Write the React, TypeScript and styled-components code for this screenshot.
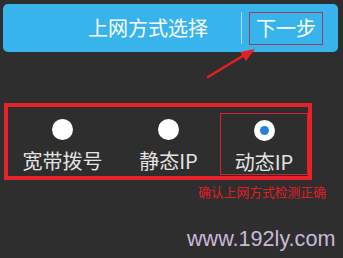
import React from "react";
import styled, { createGlobalStyle } from "styled-components";

const GlobalStyle = createGlobalStyle`
  html, body {
    margin: 0;
    padding: 0;
    background: #2e2e2e;
  }
`;

const Page = styled.div`
  position: relative;
  width: 343px;
  height: 258px;
  box-sizing: border-box;
  padding: 4px 5px 0 3px;
  background: #2e2e2e;
  font-family: "Noto Sans CJK SC", "Noto Sans", sans-serif;
  overflow: hidden;
`;

const Header = styled.div`
  height: 48px;
  border-radius: 5px;
  background: #38b4ec;
  display: flex;
  align-items: center;
  justify-content: flex-end;
  padding-right: 15px;
`;

const Title = styled.div`
  color: #fff;
  font-size: 20px;
  line-height: 1;
  margin-right: 33px;
`;

const Divider = styled.div`
  width: 1px;
  height: 32px;
  background: #a9ddf6;
  margin-right: 7px;
`;

const NextBtn = styled.div`
  width: 74px;
  height: 33px;
  box-sizing: border-box;
  border: 1.5px solid #a33b5e;
  display: flex;
  align-items: center;
  justify-content: center;
  color: #fff;
  font-size: 20px;
  line-height: 1;
`;

const Arrow = styled.svg`
  position: absolute;
  left: 200px;
  top: 44px;
`;

const Group = styled.div`
  margin: 51px 0 0 1px;
  width: 308px;
  height: 77px;
  box-sizing: border-box;
  border: 4px solid #e8222b;
  display: grid;
  grid-template-columns: 109px 103px 88px;
  align-items: start;
`;

const Option = styled.div<{ $marked?: boolean }>`
  height: ${(p) => (p.$marked ? "62px" : "69px")};
  margin-top: ${(p) => (p.$marked ? "6px" : "0")};
  box-sizing: border-box;
  border: ${(p) => (p.$marked ? "1.5px solid #d8222b" : "none")};
  display: flex;
  flex-direction: column;
  align-items: center;
  padding-top: ${(p) => (p.$marked ? "6px" : "12px")};
`;

const Radio = styled.div<{ $checked?: boolean }>`
  width: 21px;
  height: 21px;
  border-radius: 50%;
  background: #fff;
  display: flex;
  align-items: center;
  justify-content: center;
  &::after {
    content: "";
    display: ${(p) => (p.$checked ? "block" : "none")};
    width: 9px;
    height: 9px;
    border-radius: 50%;
    background: #2d7fd6;
  }
`;

const Label = styled.div`
  margin-top: 10px;
  color: #e4e4e4;
  font-size: 20px;
  line-height: 22px;
`;

const Caption = styled.div`
  margin: 4px 0 0 195px;
  color: #e01e24;
  font-size: 12.8px;
  line-height: 16px;
  white-space: nowrap;
`;

const Watermark = styled.div`
  margin: 27px 0 0 184px;
  color: #c9b9d9;
  font-family: "Liberation Sans", Arial, sans-serif;
  font-size: 21.6px;
  line-height: 24px;
  white-space: nowrap;
`;

const options = [
  { label: "宽带拨号", checked: false },
  { label: "静态IP", checked: false },
  { label: "动态IP", checked: true },
];

export default function App() {
  return (
    <Page>
      <GlobalStyle />
      <Header>
        <Title>上网方式选择</Title>
        <Divider />
        <NextBtn>下一步</NextBtn>
      </Header>
      <Arrow width="60" height="40" viewBox="0 0 60 40">
        <line x1="8" y1="33" x2="46" y2="10" stroke="#e81e25" strokeWidth="2.5" strokeLinecap="round" />
        <polygon points="55,5 40,8 46,17" fill="#e81e25" />
      </Arrow>
      <Group>
        {options.map((o) => (
          <Option key={o.label} $marked={o.checked}>
            <Radio $checked={o.checked} />
            <Label>{o.label}</Label>
          </Option>
        ))}
      </Group>
      <Caption>确认上网方式检测正确</Caption>
      <Watermark>www.192ly.com</Watermark>
    </Page>
  );
}
